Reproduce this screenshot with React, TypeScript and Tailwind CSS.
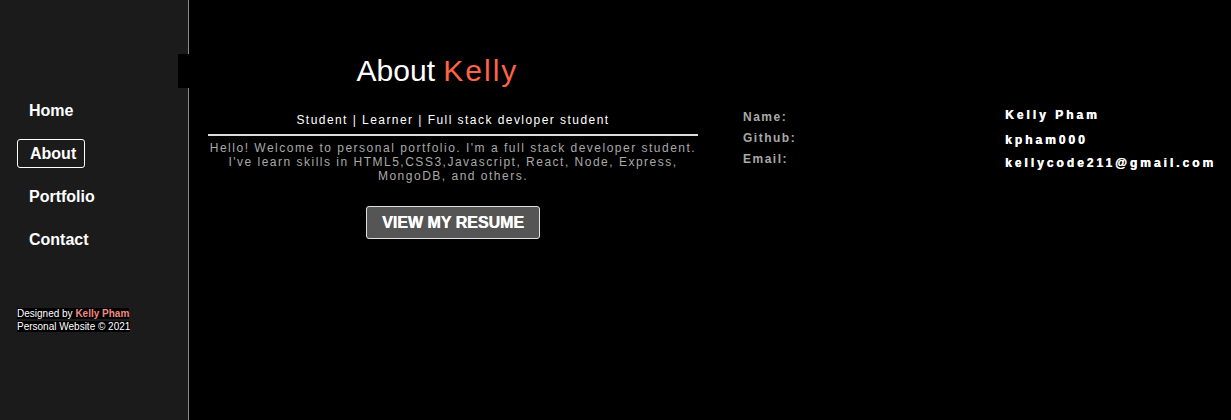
import React from 'react';

const navItems = ['Home', 'About', 'Portfolio', 'Contact'];

const info = [
  { label: 'Name:', value: 'Kelly Pham', labelCls: 'mt-[9px]', valueCls: 'mt-[7px]' },
  { label: 'Github:', value: 'kpham000', labelCls: 'mt-[7px]', valueCls: 'mt-[9px]' },
  { label: 'Email:', value: 'kellycode211@gmail.com', labelCls: 'mt-[5px]', valueCls: 'mt-[9px]' },
];

const Sidebar = () => (
  <aside className="relative w-[189px] h-[420px] shrink-0 bg-[#1b1b1b] border-r border-[#8a8a8a]">
    <nav className="flex flex-col items-start pt-[96px] pl-[17px]">
      {navItems.map((item) => (
        <a
          key={item}
          className={
            'text-white font-bold text-[16px] leading-[27px] h-[29px] mb-[14px] rounded-[3px] border ' +
            (item === 'About' ? 'border-white pl-[12px] pr-[8px]' : 'border-transparent pl-[11px] pr-[12px]')
          }
        >
          {item}
        </a>
      ))}
    </nav>
    <div className="pl-[17px] pt-[39px] text-[10px] leading-[13px] text-white">
      <div>
        <span className="bg-black">
          Designed by <span className="font-bold text-[#f28b82]">Kelly Pham</span>
        </span>
      </div>
      <div>
        <span className="bg-black">Personal Website © 2021</span>
      </div>
    </div>
  </aside>
);

const About = () => (
  <main className="flex-1 h-[420px] bg-black">
    <div className="relative -ml-[11px] mt-[54px] w-[519px] h-[34px] bg-black text-center text-[30px] leading-[34px] text-white">
      About <span className="text-[#ff6347] tracking-[2px]">Kelly</span>
    </div>
    <div className="flex mt-[24px]">
      <section className="ml-[19px] w-[490px] flex flex-col items-center">
        <h3 className="text-white text-[12px] leading-[16px] tracking-[1.45px]">
          Student | Learner | Full stack devloper student
        </h3>
        <hr className="w-full mt-[6px] border-0 h-[2px] bg-[#dcdcdc]" />
        <p className="mt-[5px] w-[510px] text-center text-[#a9a9a9] text-[12px] leading-[14px] tracking-[1.5px]">
          Hello! Welcome to personal portfolio. I'm a full stack developer student.
          <br />
          I've learn skills in HTML5,CSS3,Javascript, React, Node, Express,
          <br />
          MongoDB, and others.
        </p>
        <button className="mt-[23px] h-[33px] px-[15px] bg-[#555555] border border-[#e0e0e0] rounded-[3px] text-white font-bold text-[16px] leading-[31px] [text-shadow:0.4px_0_0_#fff]">
          VIEW MY RESUME
        </button>
      </section>
      <section className="ml-[45px] grid grid-cols-[262px_auto] -mt-[11px] content-start">
        {info.map((row) => (
          <React.Fragment key={row.label}>
            <div className={'text-[#a9a9a9] font-bold text-[12px] leading-[14px] tracking-[1.5px] ' + row.labelCls}>
              {row.label}
            </div>
            <div className={'text-white font-bold text-[12px] leading-[14px] tracking-[3px] [text-shadow:0.4px_0_0_#fff] ' + row.valueCls}>
              {row.value}
            </div>
          </React.Fragment>
        ))}
      </section>
    </div>
  </main>
);

export default function App() {
  return (
    <div className="flex w-[1231px] h-[420px] overflow-hidden bg-black font-['Liberation_Sans',Arial,sans-serif]">
      <Sidebar />
      <About />
    </div>
  );
}
